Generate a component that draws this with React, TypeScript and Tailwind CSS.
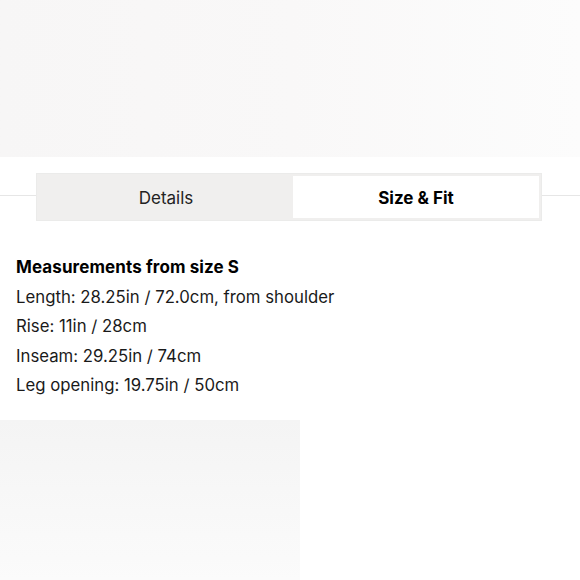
import React from 'react';

const measurements = [
  'Length: 28.25in / 72.0cm, from shoulder',
  'Rise: 11in / 28cm',
  'Inseam: 29.25in / 74cm',
  'Leg opening: 19.75in / 50cm',
];

export default function App() {
  return (
    <div className="w-[580px] h-[580px] bg-white overflow-hidden flex flex-col" style={{ fontFamily: 'Inter, "Liberation Sans", sans-serif' }}>
      {/* blurred image strip above */}
      <div className="h-[157px] bg-gradient-to-r from-[#f7f6f6] via-[#f9f8f8] to-[#fcfcfc]" />

      {/* tabs */}
      <div className="mt-[16px] flex items-start">
        <div className="flex-1 h-px mt-[22px] bg-[#e6e6e6]" />
        <div className="w-[506px] h-[48px] bg-[#f0efee] border border-[#ebebea] p-[2px] flex">
          <button className="w-[254px] pt-[3px] text-[17px] text-[#222] font-normal">Details</button>
          <button className="flex-1 pt-[3px] bg-white text-[17px] text-black font-bold">Size &amp; Fit</button>
        </div>
        <div className="w-[38px] h-px mt-[22px] bg-[#e6e6e6]" />
      </div>

      {/* size & fit content */}
      <div className="px-4 pt-[32px] text-[16.75px] leading-[29.5px] text-[#1a1a1a]">
        <p className="font-bold text-[17px] tracking-[0.1px] text-black">Measurements from size S</p>
        {measurements.map((m) => (
          <p key={m}>{m}</p>
        ))}
      </div>

      {/* blurred image below */}
      <div className="mt-auto h-[160px] flex">
        <div className="w-[300px] bg-gradient-to-b from-[#f4f4f4] to-[#fbfbfb]" />
        <div className="flex-1 bg-white" />
      </div>
    </div>
  );
}
